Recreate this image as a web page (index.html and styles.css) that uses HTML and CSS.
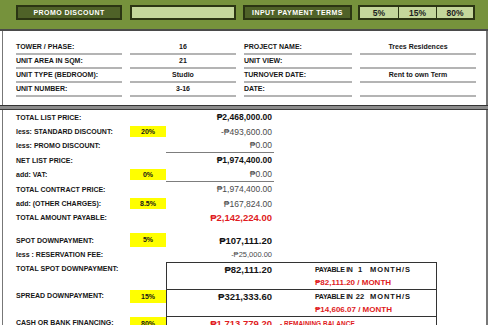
FILE: index.html
```html
<!DOCTYPE html>
<html>
<head>
<meta charset="utf-8">
<link rel="stylesheet" href="styles.css">
</head>
<body>
<div class="page">
  <header class="topbar">
    <div class="tb-box tb-dark tb-promo">PROMO DISCOUNT</div>
    <div class="tb-box tb-light tb-blank"></div>
    <div class="tb-box tb-dark tb-terms">INPUT PAYMENT TERMS</div>
    <div class="tb-cells">
      <div class="tb-cell c1">5%</div>
      <div class="tb-cell c2">15%</div>
      <div class="tb-cell c3">80%</div>
    </div>
  </header>

  <section class="info">
    <div class="info-grid">
      <div>TOWER / PHASE:</div><div class="iv">16</div><div>PROJECT NAME:</div><div class="iv">Trees Residences</div>
      <div>UNIT AREA IN SQM:</div><div class="iv">21</div><div>UNIT VIEW:</div><div class="iv"></div>
      <div>UNIT TYPE (BEDROOM):</div><div class="iv">Studio</div><div>TURNOVER DATE:</div><div class="iv">Rent to own Term</div>
      <div>UNIT NUMBER:</div><div class="iv">3-16</div><div>DATE:</div><div class="iv"></div>
    </div>
  </section>

  <div class="sep"></div>

  <section class="prices">
    <div class="prow"><div class="lbl">TOTAL LIST PRICE:</div><div></div><div class="val b">₱2,468,000.00</div></div>
    <div class="prow"><div class="lbl">less: STANDARD DISCOUNT:</div><div class="yel">20%</div><div class="val g">-₱493,600.00</div></div>
    <div class="prow"><div class="lbl">less: PROMO DISCOUNT:</div><div></div><div class="val g line">₱0.00</div></div>
    <div class="prow"><div class="lbl">NET LIST PRICE:</div><div></div><div class="val b">₱1,974,400.00</div></div>
    <div class="prow"><div class="lbl">add: VAT:</div><div class="yel">0%</div><div class="val g line">₱0.00</div></div>
    <div class="prow"><div class="lbl">TOTAL CONTRACT PRICE:</div><div></div><div class="val g">₱1,974,400.00</div></div>
    <div class="prow"><div class="lbl">add: (OTHER CHARGES):</div><div class="yel">8.5%</div><div class="val g">₱167,824.00</div></div>
    <div class="prow"><div class="lbl">TOTAL AMOUNT PAYABLE:</div><div></div><div class="val big red">₱2,142,224.00</div></div>

    <div class="spacer"></div>

    <div class="prow tall"><div class="lbl">SPOT DOWNPAYMENT:</div><div class="yel full">5%</div><div class="val big">₱107,111.20</div></div>
    <div class="prow res"><div class="lbl">less : RESERVATION FEE:</div><div></div><div class="val g sm">-₱25,000.00</div></div>

    <div class="brow">
      <div class="lbl">TOTAL SPOT DOWNPAYMENT:</div><div></div>
      <div class="box">
        <div class="amt">₱82,111.20</div>
        <div class="pay"><span class="pi">PAYABLE IN</span><span class="pn">1</span><span class="pm">MONTH/S</span></div>
        <div></div>
        <div class="mon">₱82,111.20 / MONTH</div>
      </div>
    </div>
    <div class="brow">
      <div class="lbl">SPREAD DOWNPAYMENT:</div><div class="yel sub">15%</div>
      <div class="box">
        <div class="amt">₱321,333.60</div>
        <div class="pay"><span class="pi">PAYABLE IN</span><span class="pn">22</span><span class="pm">MONTH/S</span></div>
        <div></div>
        <div class="mon">₱14,606.07 / MONTH</div>
      </div>
    </div>
    <div class="brow">
      <div class="lbl">CASH OR BANK FINANCING:</div><div class="yel sub">80%</div>
      <div class="box last">
        <div class="amt red">₱1,713,779.20</div>
        <div class="rem">- REMAINING BALANCE</div>
      </div>
    </div>
  </section>
</div>
</body>
</html>
```

FILE: styles.css
```css
* { box-sizing: border-box; margin: 0; padding: 0; }
html, body { width: 490px; height: 325px; overflow: hidden; background: #fff; }
body { font-family: "Liberation Sans", "DejaVu Sans", Arial, sans-serif; color: #161616; }

.page { width: 488px; }

/* top green bar */
.topbar {
  height: 31px;
  background: #76923c;
  border-bottom: 2px solid #4a4a4a;
  display: flex;
  align-items: flex-start;
  padding: 5px 0 0 16px;
}
.tb-box {
  height: 15px;
  border: 2px solid #2b3513;
  display: flex;
  align-items: center;
  justify-content: center;
  font-weight: 700;
  font-size: 7px;
  letter-spacing: 0.45px;
  color: #fff;
  white-space: nowrap;
}
.tb-dark { background: #4f6228; }
.tb-light { background: #c4d79b; }
.tb-promo { width: 106px; margin-right: 8px; }
.tb-blank { width: 106px; margin-right: 7px; }
.tb-terms { width: 109px; margin-right: 6px; }
.tb-cells {
  display: flex;
  height: 15px;
  border: 2px solid #2b3513;
  background: #c4d79b;
}
.tb-cell {
  height: 100%;
  display: flex;
  align-items: center;
  justify-content: center;
  font-weight: 700;
  font-size: 8.5px;
  color: #1d1d1d;
}
.c1 { width: 38px; }
.c2 { width: 38px; border-left: 1px solid #2b3513; }
.c3 { width: 37px; border-left: 1px solid #2b3513; }

/* info section */
.info {
  margin-left: 2px;
  width: 486px;
  border-left: 1px solid #777;
  border-right: 2px solid #777;
  padding: 10px 0 8px 13px;
}
.info-grid {
  display: grid;
  grid-template-columns: 106px 106px 108px 116px;
  column-gap: 8px;
}
.info-grid > div {
  height: 14px;
  line-height: 12px;
  border-bottom: 2px solid #b4b4b4;
  font-size: 7px;
  font-weight: 700;
  white-space: nowrap;
}
.info-grid > .iv { text-align: center; }

/* separator */
.sep {
  width: 488px;
  height: 5px;
  border-top: 1px solid #333;
  border-bottom: 1px solid #3a3a3a;
  background: #8c8c8c;
}

/* prices */
.prices {
  margin-left: 2px;
  width: 486px;
  height: 230px;
  border-left: 1px solid #777;
  border-right: 2px solid #777;
  padding-left: 13px;
}
.prow, .brow {
  display: grid;
  grid-template-columns: 114px 36px 108px 163px;
}
.prow { height: 14.4px; align-items: center; }
.prow.tall { height: 14px; }
.prow.res { height: 14.5px; }
.spacer { height: 8px; }

.lbl {
  font-size: 7px;
  font-weight: 700;
  white-space: nowrap;
}
.yel {
  background: #ffff00;
  height: 11px;
  line-height: 11px;
  text-align: center;
  font-size: 7px;
  font-weight: 700;
}
.yel.full { height: 14px; line-height: 14px; }
.yel.sub { height: 13px; line-height: 13px; margin-top: 1px; }

.val {
  height: 100%;
  display: flex;
  align-items: center;
  justify-content: flex-end;
  padding-right: 2px;
  font-size: 8.5px;
  white-space: nowrap;
}
.val.b { font-weight: 700; color: #111; }
.val.g { color: #4a4a4a; }
.val.sm { font-size: 7.5px; }
.val.line { border-bottom: 1px solid #7d7d7d; }
.val.big { font-weight: 700; font-size: 9.5px; color: #111; }
.red, .val.red { color: #e01b22; }

.brow { height: 27px; align-items: start; }
.brow .lbl { line-height: 13px; }
.box {
  grid-column: 3 / span 2;
  height: 27px;
  border: 1px solid #333;
  border-bottom: 0;
  display: grid;
  grid-template-columns: 107px 1fr;
  grid-template-rows: 13px 13px;
}
.box.last { display: flex; align-items: center; height: 14px; }
.amt {
  text-align: right;
  padding-right: 2px;
  font-weight: 700;
  font-size: 9.5px;
  line-height: 13px;
  white-space: nowrap;
}
.box.last .amt { width: 107px; flex: none; }
.pay, .mon {
  padding-left: 41px;
  font-weight: 700;
  white-space: nowrap;
  line-height: 13px;
}
.pay { font-size: 7.5px; color: #161616; }
.pi { display: inline-block; width: 39px; font-size: 7px; letter-spacing: -0.3px; }
.pn { display: inline-block; width: 12px; text-align: center; }
.pm { display: inline-block; margin-left: 4px; letter-spacing: 0.9px; }
.mon { font-size: 8px; color: #e01b22; }
.rem {
  padding-left: 6px;
  font-size: 6.5px;
  font-weight: 700;
  color: #e01b22;
  white-space: nowrap;
}
```
